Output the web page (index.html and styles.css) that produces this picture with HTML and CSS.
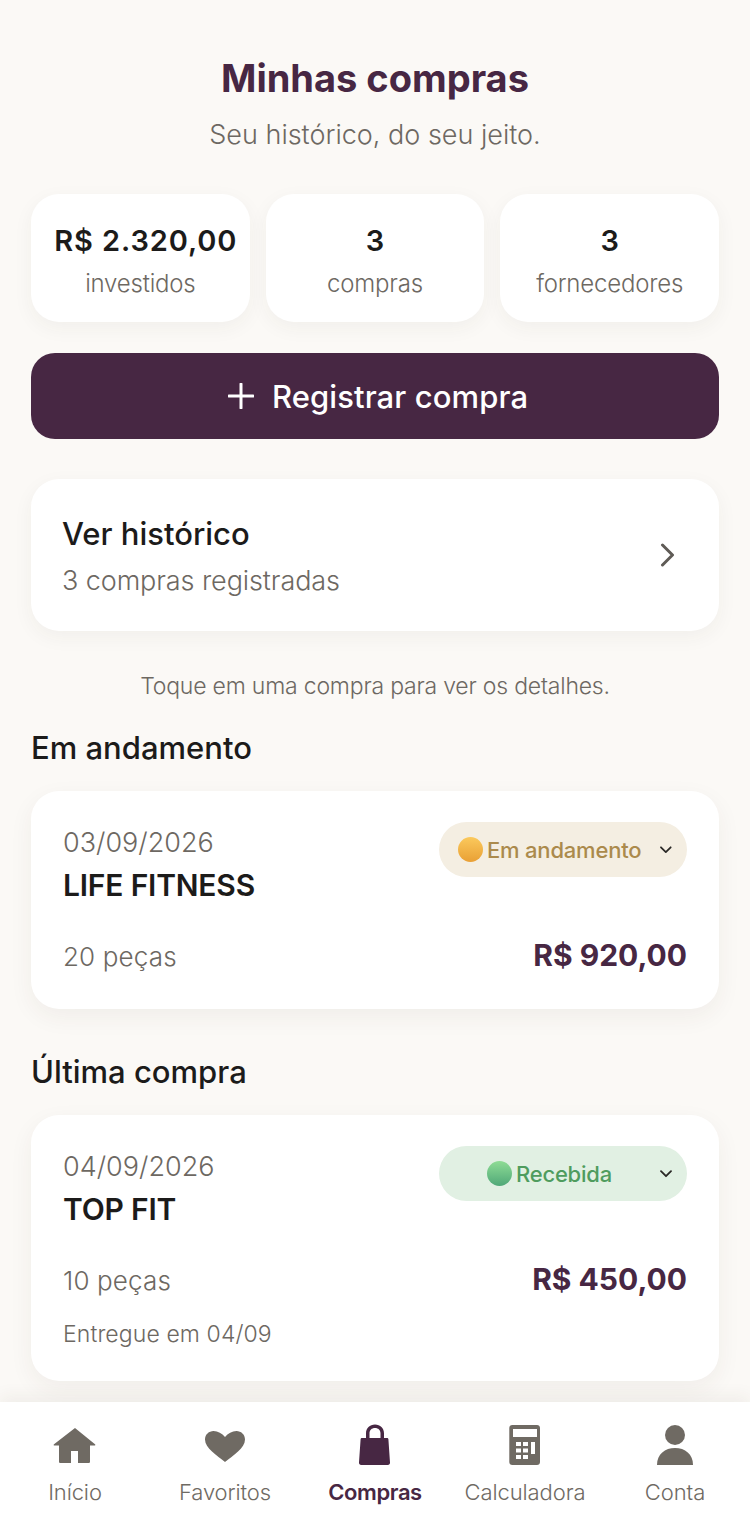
FILE: index.html
```html
<!DOCTYPE html>
<html lang="pt-BR">
<head>
  <meta charset="UTF-8">
  <meta name="viewport" content="width=device-width, initial-scale=1.0">
  <title>Minhas compras</title>
  <link rel="stylesheet" href="styles.css">
</head>
<body>
  <div class="app">
    <main class="content">
      <h1 class="title">Minhas compras</h1>
      <p class="subtitle">Seu histórico, do seu jeito.</p>

      <div class="stats">
        <div class="stat">
          <div class="stat-value stat-value-money">R$ 2.320,00</div>
          <div class="stat-label">investidos</div>
        </div>
        <div class="stat">
          <div class="stat-value">3</div>
          <div class="stat-label">compras</div>
        </div>
        <div class="stat">
          <div class="stat-value">3</div>
          <div class="stat-label">fornecedores</div>
        </div>
      </div>

      <button class="add-btn">
        <svg class="add-icon" viewBox="0 0 26 26"><path d="M13 1v24M1 13h24"/></svg>
        Registrar compra
      </button>

      <div class="history">
        <div>
          <div class="history-title">Ver histórico</div>
          <div class="history-sub">3 compras registradas</div>
        </div>
        <svg class="history-arrow" viewBox="0 0 16 24"><path d="M2.5 2l10 10-10 10"/></svg>
      </div>

      <p class="hint">Toque em uma compra para ver os detalhes.</p>

      <h2 class="section">Em andamento</h2>
      <div class="card">
        <div class="card-top">
          <div>
            <div class="card-date">03/09/2026</div>
            <div class="card-name">LIFE FITNESS</div>
          </div>
          <div class="status status-progress">
            <span class="status-main"><span class="dot dot-yellow"></span>Em andamento</span>
            <svg class="status-caret" viewBox="0 0 12 8"><path d="M1 1.2l5 5 5-5"/></svg>
          </div>
        </div>
        <div class="card-bottom">
          <span class="card-qty">20 peças</span>
          <span class="card-price">R$ 920,00</span>
        </div>
      </div>

      <h2 class="section">Última compra</h2>
      <div class="card">
        <div class="card-top">
          <div>
            <div class="card-date">04/09/2026</div>
            <div class="card-name">TOP FIT</div>
          </div>
          <div class="status status-done">
            <span class="status-main"><span class="dot dot-green"></span>Recebida</span>
            <svg class="status-caret" viewBox="0 0 12 8"><path d="M1 1.2l5 5 5-5"/></svg>
          </div>
        </div>
        <div class="card-bottom">
          <span class="card-qty">10 peças</span>
          <span class="card-price">R$ 450,00</span>
        </div>
        <div class="card-note">Entregue em 04/09</div>
      </div>
    </main>

    <nav class="nav">
      <div class="nav-item">
        <svg class="nav-icon" viewBox="0 0 44 44"><path d="M22 4L1 20.200c-.7.6-.4 1.300.5 1.300H6V37.500c0 1 .6 1.500 1.500 1.500H18V27h7v12h10.500c.9 0 1.500-.5 1.500-1.500V21.500h4.500c.9 0 1.200-.7.500-1.300z"/></svg>
        <span>Início</span>
      </div>
      <div class="nav-item">
        <svg class="nav-icon" viewBox="0 0 44 44"><path d="M22 38C14 31.500 2 24 2 15.500 2 10.500 6 7 10.500 7c4.500 0 8.500 2.500 11.500 6 3-3.500 7-6 11.500-6C38 7 42 10.500 42 15.500 42 24 30 31.500 22 38z"/></svg>
        <span>Favoritos</span>
      </div>
      <div class="nav-item nav-active">
        <svg class="nav-icon" viewBox="0 0 44 44"><path fill-rule="evenodd" d="M13 14V9.500C13 4 16.800.5 22 .5S31 4 31 9.500V14h3c.8 0 1.300.5 1.400 1.300L37 38.500c.1 1.500-.8 2.500-2.200 2.500H8.200C6.800 41 5.900 40 6 38.500L7.600 15.300C7.700 14.500 8.200 14 9 14zm3.500 0h11V9.500c0-3.300-2.200-5.500-5.500-5.500s-5.500 2.200-5.500 5.500z"/></svg>
        <span>Compras</span>
      </div>
      <div class="nav-item">
        <svg class="nav-icon" viewBox="0 0 44 44"><path fill-rule="evenodd" d="M9.300 1h24.700c1.800 0 3 1.200 3 3v34c0 1.800-1.200 3-3 3H9.300c-1.800 0-3-1.200-3-3V4c0-1.800 1.200-3 3-3zM10 5v8h24V5zm3 13v4h5v-4zm7 0v4h5v-4zm8 0v12h4V18zm-15 6.500v4h5v-4zm7 0v4h5v-4zM13 31v4h5v-4zm7 0v4h5v-4z"/></svg>
        <span>Calculadora</span>
      </div>
      <div class="nav-item">
        <svg class="nav-icon" viewBox="0 0 44 44"><circle cx="22" cy="11" r="10"/><path d="M4 41c0-11 8-17 18-17s18 6 18 17z"/></svg>
        <span>Conta</span>
      </div>
    </nav>
  </div>
</body>
</html>
```

FILE: styles.css
```css
* {
  box-sizing: border-box;
}

body {
  margin: 0;
  font-family: 'Inter', 'Noto Sans', sans-serif;
  background-color: #fbf9f6;
  color: #1c1b1a;
}

.app {
  height: 1528px;
  overflow: hidden;
  display: flex;
  flex-direction: column;
}

.content {
  flex: 1;
  overflow: hidden;
  padding: 52px 31px 0;
}

.title {
  margin: 0;
  height: 52px;
  font-size: 38px;
  line-height: 52px;
  font-weight: 700;
  text-align: center;
  color: #472743;
}

.subtitle {
  margin: 0;
  height: 50px;
  padding-top: 14px;
  font-size: 27px;
  line-height: 34px;
  font-weight: 300;
  text-align: center;
  color: #6d6862;
}

.stats {
  margin-top: 40px;
  display: grid;
  grid-template-columns: repeat(3, 1fr);
  gap: 16px;
}

.stat {
  height: 128px;
  padding-top: 28px;
  background: #ffffff;
  border-radius: 28px;
  box-shadow: 0 6px 20px rgba(60, 50, 40, 0.05);
  text-align: center;
}

.stat-value {
  font-size: 29px;
  line-height: 38px;
  font-weight: 600;
  white-space: nowrap;
}

.stat-value-money {
  padding-left: 11px;
  letter-spacing: 0.9px;
}

.stat-label {
  margin-top: 8px;
  font-size: 24px;
  line-height: 32px;
  font-weight: 300;
  letter-spacing: -0.2px;
  color: #6d6862;
}

.add-btn {
  margin-top: 31px;
  width: 100%;
  height: 86px;
  padding: 0 0 0 6px;
  display: flex;
  align-items: center;
  justify-content: center;
  gap: 18px;
  border: none;
  border-radius: 24px;
  background: #472743;
  color: #ffffff;
  font-family: inherit;
  font-size: 31px;
  font-weight: 500;
  letter-spacing: 0.1px;
}

.add-icon {
  width: 26px;
  height: 26px;
  fill: none;
  stroke: #ffffff;
  stroke-width: 3;
  stroke-linecap: round;
}

.history {
  margin-top: 40px;
  height: 152px;
  padding: 3px 43px 0 31px;
  display: flex;
  align-items: center;
  justify-content: space-between;
  background: #ffffff;
  border-radius: 28px;
  box-shadow: 0 6px 20px rgba(60, 50, 40, 0.05);
}

.history-title {
  font-size: 31px;
  line-height: 40px;
  font-weight: 500;
}

.history-sub {
  margin-top: 9px;
  font-size: 27px;
  line-height: 36px;
  font-weight: 300;
  letter-spacing: -0.1px;
  color: #6d6862;
}

.history-arrow {
  width: 16px;
  height: 24px;
  margin-top: -3px;
  fill: none;
  stroke: #5f5b56;
  stroke-width: 3;
  stroke-linecap: round;
  stroke-linejoin: round;
}

.hint {
  margin: 39px 0 0;
  font-size: 23px;
  line-height: 32px;
  font-weight: 300;
  letter-spacing: -0.2px;
  text-align: center;
  color: #6d6862;
}

.section {
  margin: 26px 0 0;
  height: 41px;
  font-size: 31px;
  line-height: 40px;
  font-weight: 500;
}

.card {
  margin-top: 22px;
  min-height: 218px;
  padding: 32px 32px 0;
  background: #ffffff;
  border-radius: 28px;
  box-shadow: 0 8px 24px rgba(60, 50, 40, 0.06);
}

.card + .section {
  margin-top: 43px;
}

.card-top {
  display: flex;
  justify-content: space-between;
  align-items: flex-start;
}

.card-date {
  font-size: 27px;
  line-height: 40px;
  font-weight: 300;
  color: #6d6862;
}

.card-name {
  margin-top: -1px;
  font-size: 30px;
  line-height: 46px;
  font-weight: 600;
  letter-spacing: -0.2px;
}

.status {
  width: 248px;
  height: 55px;
  margin-top: -1px;
  padding: 0 15px 0 19px;
  display: flex;
  align-items: center;
  border-radius: 28px;
  font-size: 22px;
  font-weight: 500;
  letter-spacing: -0.2px;
}

.status-main {
  flex: 1;
  margin-right: 19px;
  display: flex;
  align-items: center;
  justify-content: center;
  gap: 4px;
  white-space: nowrap;
}

.status-progress {
  background: #f4eee2;
  color: #ab8a4c;
}

.status-done {
  background: #e1f0e3;
  color: #4f9c5e;
}

.dot {
  width: 25px;
  height: 25px;
  border-radius: 50%;
}

.dot-yellow {
  background: linear-gradient(#fbc95c, #e9a035);
}

.dot-green {
  background: linear-gradient(#8fdc95, #4fa878);
}

.status-caret {
  width: 12px;
  height: 8px;
  fill: none;
  stroke: #2a2826;
  stroke-width: 1.8;
  stroke-linecap: round;
  stroke-linejoin: round;
}

.card-bottom {
  margin-top: 29px;
  display: flex;
  justify-content: space-between;
  align-items: baseline;
}

.card-qty {
  font-size: 26px;
  font-weight: 300;
  letter-spacing: 0.15px;
  color: #6d6862;
}

.card-price {
  font-size: 30px;
  font-weight: 700;
  color: #472743;
}

.card-note {
  margin-top: 21px;
  padding-bottom: 31px;
  font-size: 23px;
  line-height: 32px;
  font-weight: 300;
  letter-spacing: 0.1px;
  color: #6d6862;
}

.nav {
  height: 126px;
  flex-shrink: 0;
  display: grid;
  grid-template-columns: repeat(5, 1fr);
  background: #ffffff;
  box-shadow: 0 -6px 16px rgba(60, 50, 40, 0.06);
}

.nav-item {
  padding-top: 22px;
  display: flex;
  flex-direction: column;
  align-items: center;
  font-size: 22px;
  font-weight: 300;
  letter-spacing: -0.1px;
  color: #6f6a63;
}

.nav-icon {
  width: 44px;
  height: 44px;
  margin-bottom: 11px;
  fill: #6f6a63;
}

.nav-active {
  font-weight: 600;
  letter-spacing: -0.4px;
  color: #472743;
}

.nav-active .nav-icon {
  fill: #472743;
}
```
